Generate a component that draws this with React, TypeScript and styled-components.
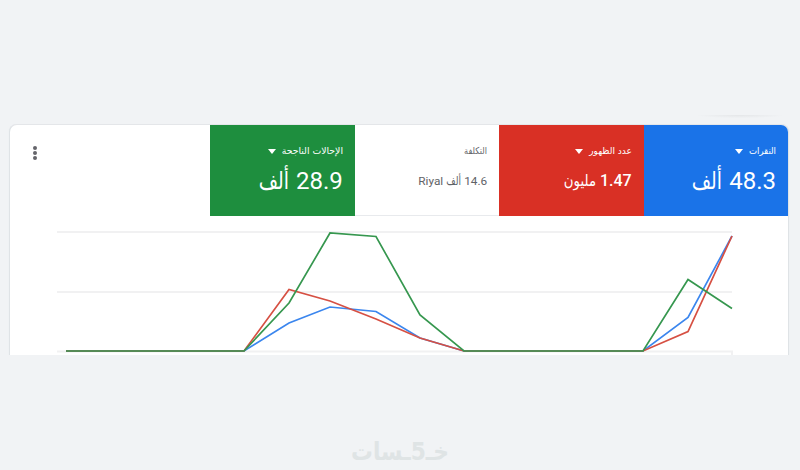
import React from 'react';
import styled, { createGlobalStyle } from 'styled-components';

const GlobalStyle = createGlobalStyle`
  * { box-sizing: border-box; }
  body { margin: 0; background: #f1f3f5; }
`;

const Page = styled.main`
  width: 800px;
  height: 470px;
  overflow: hidden;
  background: #f1f3f5;
  display: flex;
  flex-direction: column;
  font-family: Roboto, 'DejaVu Sans', sans-serif;
`;

const TopShade = styled.div`
  width: 84px;
  height: 3px;
  margin: 115px 0 6px 698px;
  background: radial-gradient(ellipse at top, #e4e6e8, #f1f3f5 75%);
`;

const Clip = styled.div`
  height: 231px;
  padding: 0 11px 0 9px;
  overflow: hidden;
  flex: none;
`;

const Card = styled.section`
  height: 240px;
  width: 780px;
  border: 1px solid #dfe3e6;
  border-top-color: #e4e6e9;
  border-radius: 8px;
  background: #fff;
  box-shadow: 0 0 1px #dfe3e6;
  overflow: hidden;
`;

const Metrics = styled.header`
  display: grid;
  grid-template-columns: 144.4px 144.4px 144.4px 144.4px 1fr;
  height: 91px;
  direction: rtl;
`;

const Tile = styled.div<{ $bg: string; $fg: string; $line?: boolean }>`
  background: ${p => p.$bg};
  color: ${p => p.$fg};
  border-bottom: 1px solid ${p => (p.$line ? '#e8eaed' : p.$bg)};
  padding: 17px 12px 0 0;
`;

const Label = styled.div`
  display: flex;
  align-items: center;
  height: 16px;
`;

const Value = styled.div<{ $size: number; $weight?: number }>`
  display: flex;
  align-items: baseline;
  height: 36px;
  margin-top: 5px;
  line-height: 36px;
  font-size: ${p => p.$size}px;
  font-weight: ${p => p.$weight ?? 400};
`;

const Word = styled.span<{ $w: number; $size: number; $sx?: number; $gap?: number }>`
  width: ${p => p.$w}px;
  margin-right: ${p => p.$gap ?? 0}px;
  font-family: 'DejaVu Sans', sans-serif;
  font-weight: 400;
  font-size: ${p => p.$size}px;
  white-space: nowrap;
  transform: scaleX(${p => p.$sx ?? 1});
  transform-origin: right center;
`;

const Unit = styled.span`
  margin-right: 4px;
`;

const Caret = styled.i`
  margin: 3px 6px 0 0;
  border: 4.5px solid transparent;
  border-top: 5px solid #fff;
  border-bottom: 0;
`;

const Menu = styled.div`
  display: flex;
  flex-direction: column;
  align-items: flex-end;
  gap: 1px;
  padding: 21px 0 0 23px;
`;

const Dot = styled.i`
  width: 4px;
  height: 4px;
  border-radius: 50%;
  background: #65656b;
`;

const Chart = styled.svg`
  display: block;
`;

const Footer = styled.footer`
  display: flex;
  direction: rtl;
  align-items: baseline;
  justify-content: center;
  padding-top: 79px;
  color: #dfe4e5;
  font: bold 25px/36px 'DejaVu Sans', sans-serif;
  transform: scaleX(0.87);
`;

const series = [
  { color: '#3b86ee', points: '66,351 244,351 289,323 330,307 376,311.5 420,338 464,351 643,351 688,317.5 732,236' },
  { color: '#d65043', points: '66,351 244,351 289,289.5 330,301 376,319 420,338 464,351 643,351 688,331.5 732,236' },
  { color: '#36974f', points: '66,351 244,351 289,303 330,233 376,236.5 420,315 464,351 643,351 688,279.5 732,308.5' },
];

export default function App() {
  return (
    <Page>
      <GlobalStyle />
      <TopShade />
      <Clip>
        <Card>
          <Metrics>
            <Tile $bg="#1a73e8" $fg="#fff">
              <Label><Word $w={27} $size={9.5} $sx={0.9}>النقرات</Word><Caret /></Label>
              <Value $size={24}>48.3<Word $w={30} $size={24} $sx={0.78} $gap={7}>ألف</Word></Value>
            </Tile>
            <Tile $bg="#d93025" $fg="#fff">
              <Label><Word $w={43} $size={9.5} $sx={0.95}>عدد الظهور</Word><Caret /></Label>
              <Value $size={16} $weight={500}>1.47<Word $w={34} $size={16} $sx={0.83} $gap={4}>مليون</Word></Value>
            </Tile>
            <Tile $bg="#fff" $fg="#5f6368" $line>
              <Label><Word $w={22} $size={9.5} $sx={0.86}>التكلفة</Word></Label>
              <Value $size={11.8}>14.6<Word $w={14} $size={12} $sx={0.76} $gap={3}>ألف</Word><Unit>Riyal</Unit></Value>
            </Tile>
            <Tile $bg="#1e8e3e" $fg="#fff">
              <Label><Word $w={61} $size={9.5} $sx={0.98}>الإحالات الناجحة</Word><Caret /></Label>
              <Value $size={24}>28.9<Word $w={30} $size={24} $sx={0.78} $gap={7}>ألف</Word></Value>
            </Tile>
            <Menu><Dot /><Dot /><Dot /></Menu>
          </Metrics>
          <Chart width="778" height="139" viewBox="10 216 778 139">
            <path d="M57 232H732M57 292H732M57 351.5H732V356" fill="none" stroke="#f1f1f2" strokeWidth="2" />
            {series.map(s => (
              <polyline key={s.color} points={s.points} fill="none" stroke={s.color} strokeWidth="1.7" />
            ))}
          </Chart>
        </Card>
      </Clip>
      <Footer><span>خـ</span><span>5</span><span>ـسات</span></Footer>
    </Page>
  );
}
